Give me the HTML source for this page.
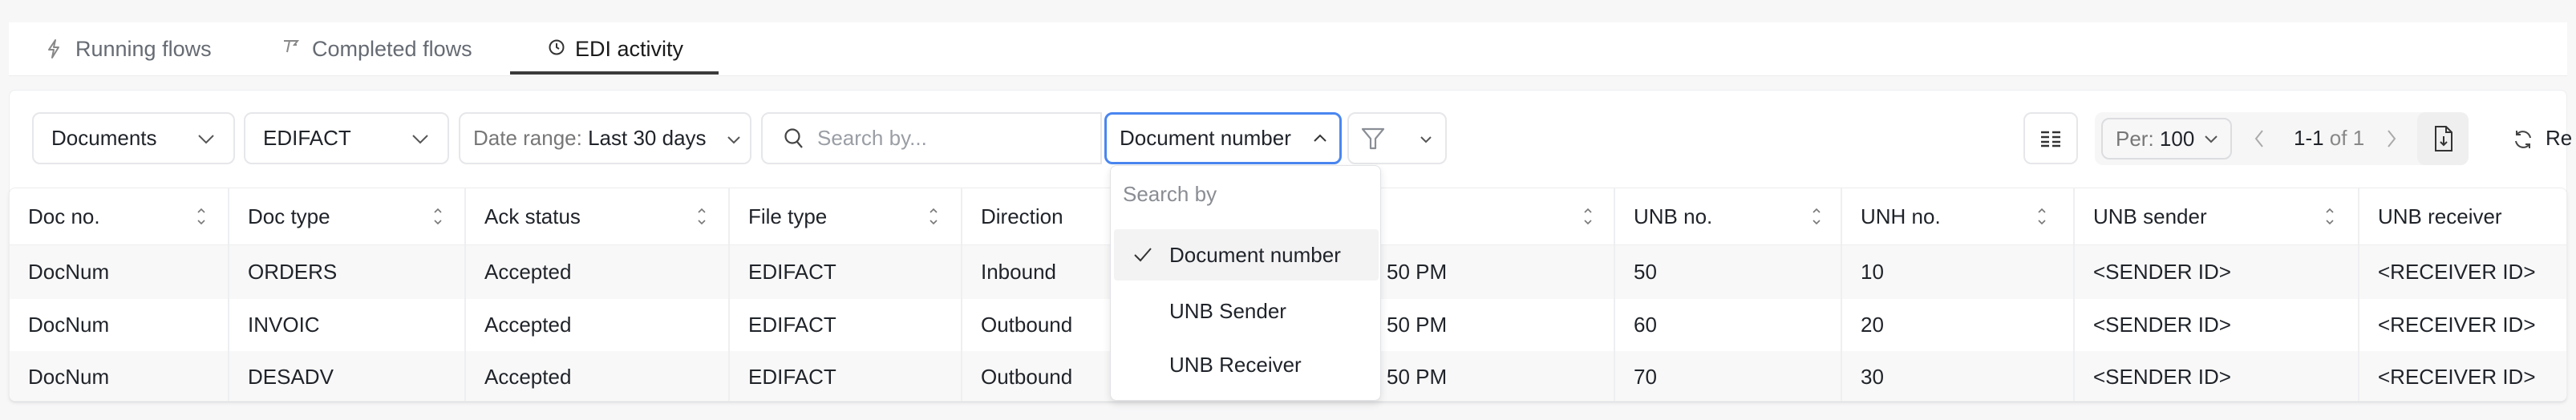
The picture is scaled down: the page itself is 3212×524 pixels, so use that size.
<!DOCTYPE html>
<html><head><meta charset="utf-8"><style>
*{box-sizing:border-box;margin:0;padding:0}
body{width:3212px;height:524px;background:#f7f7f8;font-family:"Liberation Sans",sans-serif;color:#1f2329;position:relative;overflow:hidden;font-size:26px}
.a{position:absolute}
.tabbar{left:11px;top:28px;width:3190px;height:67px;background:#fff;border-bottom:1px solid #ececec}
.tab{top:46px;font-size:27px;color:#666b73;white-space:nowrap}
.panel{left:11px;top:112px;width:3190px;height:390px;background:#fff;border:1px solid #eceef0;border-radius:8px}
.box{top:140px;height:65px;border:2px solid #e6e7ea;border-radius:10px;background:#fff;display:flex;align-items:center;padding:0 22px;white-space:nowrap}
.chev{position:absolute;right:22px;top:24px}
.table{left:11px;top:234px;width:3190px;height:267px;background:#fff;border-radius:8px;box-shadow:0 2px 4px rgba(0,0,0,.08);overflow:hidden;border:1px solid #eee}
.row{position:absolute;left:0;width:3190px}
.cell{position:absolute;top:0;height:100%;border-left:2px solid #eeeff1;display:flex;align-items:center;padding-left:23px;white-space:nowrap}
.dt{padding-left:239px}
.dd{left:1384px;top:206px;width:338px;height:294px;background:#fff;border:1px solid #e2e3e6;border-radius:8px;box-shadow:0 4px 10px rgba(0,0,0,.10)}
</style></head><body>
<div class="a tabbar"></div>
<svg class="a" style="left:58px;top:48px" width="18" height="26" viewBox="0 0 18 26"><path d="M11 2L3 14h6l-2 10 8-13H9z" fill="none" stroke="#888" stroke-width="2" stroke-linejoin="round"/></svg>
<div class="a tab" style="left:94px">Running flows</div>
<svg class="a" style="left:352px;top:48px" width="22" height="20" viewBox="0 0 22 20"><path d="M2 3h17l-4 5 3 0M9 3l-3 14" fill="none" stroke="#888" stroke-width="2"/></svg>
<div class="a tab" style="left:389px">Completed flows</div>
<svg class="a" style="left:683px;top:48px" width="22" height="22" viewBox="0 0 22 22"><circle cx="11" cy="11" r="8.5" fill="none" stroke="#333" stroke-width="2"/><path d="M11 6v5l3 2" fill="none" stroke="#333" stroke-width="2"/></svg>
<div class="a tab" style="left:717px;color:#1a1a1a">EDI activity</div>
<div class="a" style="left:636px;top:89px;width:260px;height:4px;background:#3a3a3a"></div>

<div class="a panel"></div>
<div class="a box" style="left:40px;width:253px">Documents<svg class="chev" width="24" height="16" viewBox="0 0 24 16"><path d="M3 3l9 9 9-9" fill="none" stroke="#555" stroke-width="2"/></svg></div>
<div class="a box" style="left:304px;width:256px">EDIFACT<svg class="chev" width="24" height="16" viewBox="0 0 24 16"><path d="M3 3l9 9 9-9" fill="none" stroke="#555" stroke-width="2"/></svg></div>
<div class="a box" style="left:572px;width:365px;padding-left:16px"><span style="color:#777">Date range:&nbsp;</span>Last 30 days<svg style="position:absolute;right:10px;top:26px" width="20" height="14" viewBox="0 0 20 14"><path d="M3 3l7 7 7-7" fill="none" stroke="#555" stroke-width="2"/></svg></div>
<div class="a box" style="left:949px;width:425px;padding-left:26px;border-radius:10px 0 0 10px"><svg width="26" height="28" viewBox="0 0 26 28"><circle cx="11" cy="11" r="8.5" fill="none" stroke="#444" stroke-width="2.2"/><path d="M17 18l6 7" stroke="#444" stroke-width="2.2"/></svg><span style="color:#9a9ea5;margin-left:16px">Search by...</span></div>
<div class="a box" style="left:1377px;width:296px;border:3px solid #4a86f0;padding-left:16px">Document number<svg style="position:absolute;right:14px;top:22px" width="20" height="14" viewBox="0 0 20 14"><path d="M3 11l7-7 7 7" fill="none" stroke="#333" stroke-width="2"/></svg></div>
<div class="a box" style="left:1680px;width:124px;padding:0"><svg style="position:absolute;left:14px;top:16px" width="32" height="30" viewBox="0 0 32 30"><path d="M3 3h26L19 15v12h-6V15z" fill="none" stroke="#8a8f96" stroke-width="2.2" stroke-linejoin="round"/></svg><svg style="position:absolute;left:88px;top:26px" width="16" height="12" viewBox="0 0 16 12"><path d="M2 3l6 6 6-6" fill="none" stroke="#555" stroke-width="2"/></svg></div>

<div class="a box" style="left:2523px;width:68px;padding:0;justify-content:center"><svg width="28" height="22" viewBox="0 0 28 22"><path d="M2 3h10M16 3h10M2 9h10M16 9h10M2 15h10M16 15h10M2 20h10M16 20h10" stroke="#333" stroke-width="2.5"/></svg></div>
<div class="a" style="left:2612px;top:140px;width:466px;height:66px;background:#f6f6f7;border-radius:10px"></div>
<div class="a box" style="left:2620px;top:147px;height:52px;width:163px;padding-left:16px;background:#f7f7f8;border-color:#dcdde0"><span style="color:#777">Per:&nbsp;</span>100<svg style="position:absolute;right:14px;top:18px" width="20" height="14" viewBox="0 0 20 14"><path d="M3 3l7 7 7-7" fill="none" stroke="#555" stroke-width="2"/></svg></div>
<svg class="a" style="left:2810px;top:160px" width="14" height="26" viewBox="0 0 14 26"><path d="M11 3L3 13l8 10" fill="none" stroke="#aaa" stroke-width="2"/></svg>
<div class="a" style="left:2860px;top:157px;white-space:nowrap">1-1<span style="color:#888"> of 1</span></div>
<svg class="a" style="left:2975px;top:160px" width="14" height="26" viewBox="0 0 14 26"><path d="M3 3l8 10-8 10" fill="none" stroke="#aaa" stroke-width="2"/></svg>
<div class="a" style="left:3014px;top:140px;width:64px;height:66px;background:#efeff0;border-radius:10px"></div>
<svg class="a" style="left:3034px;top:156px" width="26" height="34" viewBox="0 0 26 34"><path d="M3 2h13l7 7v23H3z M16 2v7h7 M13 14v11 M9 21l4 4 4-4" fill="none" stroke="#333" stroke-width="2"/></svg>
<svg class="a" style="left:3132px;top:160px" width="28" height="28" viewBox="0 0 28 28"><path d="M23 12A9.5 9.5 0 0 0 6 8M5 16a9.5 9.5 0 0 0 17 4M6 3v5h5M22 25v-5h-5" fill="none" stroke="#444" stroke-width="2"/></svg>
<div class="a" style="left:3174px;top:157px">Re</div>

<div class="a table">
<div class="row" style="top:0;height:71px;background:#fff;border-bottom:1px solid #eee">
<div class="cell" style="left:0;width:272px;border-left:0">Doc no.</div>
<div class="cell" style="left:272px;width:295px">Doc type</div>
<div class="cell" style="left:567px;width:329px">Ack status</div>
<div class="cell" style="left:896px;width:290px">File type</div>
<div class="cell" style="left:1186px;width:290px">Direction</div>
<div class="cell" style="left:1476px;width:524px">Created at</div>
<div class="cell" style="left:2000px;width:283px">UNB no.</div>
<div class="cell" style="left:2283px;width:290px">UNH no.</div>
<div class="cell" style="left:2573px;width:355px">UNB sender</div>
<div class="cell" style="left:2928px;width:262px">UNB receiver</div>
</div>
<div class="row" style="top:71px;height:67px;background:#f8f8f8">
<div class="cell" style="left:0;width:272px;border-left:0">DocNum</div><div class="cell" style="left:272px;width:295px">ORDERS</div><div class="cell" style="left:567px;width:329px">Accepted</div><div class="cell" style="left:896px;width:290px">EDIFACT</div><div class="cell" style="left:1186px;width:290px">Inbound</div><div class="cell dt" style="left:1476px;width:524px">50 PM</div><div class="cell" style="left:2000px;width:283px">50</div><div class="cell" style="left:2283px;width:290px">10</div><div class="cell" style="left:2573px;width:355px">&lt;SENDER ID&gt;</div><div class="cell" style="left:2928px;width:262px">&lt;RECEIVER ID&gt;</div></div>
<div class="row" style="top:138px;height:65px;background:#fff">
<div class="cell" style="left:0;width:272px;border-left:0">DocNum</div><div class="cell" style="left:272px;width:295px">INVOIC</div><div class="cell" style="left:567px;width:329px">Accepted</div><div class="cell" style="left:896px;width:290px">EDIFACT</div><div class="cell" style="left:1186px;width:290px">Outbound</div><div class="cell dt" style="left:1476px;width:524px">50 PM</div><div class="cell" style="left:2000px;width:283px">60</div><div class="cell" style="left:2283px;width:290px">20</div><div class="cell" style="left:2573px;width:355px">&lt;SENDER ID&gt;</div><div class="cell" style="left:2928px;width:262px">&lt;RECEIVER ID&gt;</div></div>
<div class="row" style="top:203px;height:64px;background:#f8f8f8">
<div class="cell" style="left:0;width:272px;border-left:0">DocNum</div><div class="cell" style="left:272px;width:295px">DESADV</div><div class="cell" style="left:567px;width:329px">Accepted</div><div class="cell" style="left:896px;width:290px">EDIFACT</div><div class="cell" style="left:1186px;width:290px">Outbound</div><div class="cell dt" style="left:1476px;width:524px">50 PM</div><div class="cell" style="left:2000px;width:283px">70</div><div class="cell" style="left:2283px;width:290px">30</div><div class="cell" style="left:2573px;width:355px">&lt;SENDER ID&gt;</div><div class="cell" style="left:2928px;width:262px">&lt;RECEIVER ID&gt;</div></div>
</div>
<svg class="a" style="left:0;top:258px" width="3212" height="24">
<g fill="none" stroke="#777" stroke-width="1.6">
<path id="s" d="M247 7l4-4 4 4M247 17l4 4 4-4"/>
<use href="#s" x="295"/><use href="#s" x="624"/><use href="#s" x="913"/><use href="#s" x="1729"/><use href="#s" x="2014"/><use href="#s" x="2295"/><use href="#s" x="2654"/>
</g></svg>

<div class="a dd">
<div class="a" style="left:15px;top:20px;color:#8a8d93">Search by</div>
<div class="a" style="left:4px;top:79px;width:330px;height:64px;background:#f3f3f4;border-radius:4px"></div>
<svg class="a" style="left:27px;top:100px" width="26" height="22" viewBox="0 0 26 22"><path d="M3 11l7 7L23 3" fill="none" stroke="#333" stroke-width="2"/></svg>
<div class="a" style="left:73px;top:96px">Document number</div>
<div class="a" style="left:73px;top:166px">UNB Sender</div>
<div class="a" style="left:73px;top:233px">UNB Receiver</div>
</div>
</body></html>
